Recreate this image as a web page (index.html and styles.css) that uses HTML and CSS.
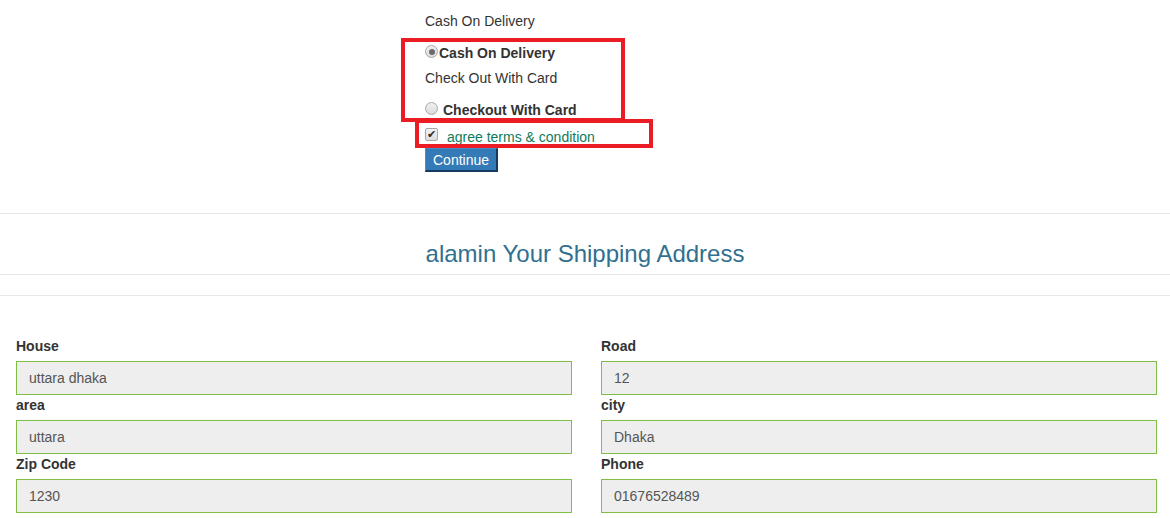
FILE: index.html
```html
<!DOCTYPE html>
<html>
<head>
<meta charset="utf-8">
<link rel="stylesheet" href="styles.css">
</head>
<body>
<section class="payment">
  <p class="method-title">Cash On Delivery</p>
  <label class="option tight"><span class="radio checked"></span><b>Cash On Delivery</b></label>
  <p class="method-title second">Check Out With Card</p>
  <label class="option"><span class="radio"></span><b>Checkout With Card</b></label>
  <label class="agree"><span class="check">&#10004;</span><span class="agree-text">agree terms &amp; condition</span></label>
  <button class="continue" type="button">Continue</button>
  <div class="mark mark-methods"></div>
  <div class="mark mark-agree"></div>
</section>
<hr class="rule rule-top">
<h2 class="ship-title">alamin Your Shipping Address</h2>
<hr class="rule rule-mid">
<hr class="rule rule-low">
<form class="address">
  <div class="col">
    <label class="field-label">House</label>
    <input class="field" value="uttara dhaka" readonly>
    <label class="field-label">area</label>
    <input class="field" value="uttara" readonly>
    <label class="field-label">Zip Code</label>
    <input class="field" value="1230" readonly>
  </div>
  <div class="col">
    <label class="field-label">Road</label>
    <input class="field" value="12" readonly>
    <label class="field-label">city</label>
    <input class="field" value="Dhaka" readonly>
    <label class="field-label">Phone</label>
    <input class="field" value="01676528489" readonly>
  </div>
</form>
</body>
</html>
```
FILE: styles.css
```css
html, body {
  margin: 0;
  padding: 0;
  background: #fff;
}
body {
  font-family: "Liberation Sans", Arial, sans-serif;
  font-size: 14px;
  line-height: 20px;
  color: #333;
  overflow: hidden;
}
.payment {
  position: relative;
  padding: 11px 0 0 425px;
  height: 162px;
}
.method-title {
  margin: 0 0 11px;
  line-height: 20px;
}
.method-title.second {
  margin-bottom: 11px;
}
.option {
  display: flex;
  align-items: flex-start;
  height: 20px;
  margin-bottom: 6px;
  gap: 5px;
}
.option.tight {
  gap: 1px;
}
.option b {
  font-weight: bold;
  color: #333;
  padding-top: 1px;
  line-height: 20px;
}
.option + .agree {
  margin-top: 7px;
}
.radio {
  box-sizing: border-box;
  width: 13px;
  height: 13px;
  flex: none;
  border-radius: 50%;
  border: 1px solid #a9a9a9;
  background: linear-gradient(#f0f0f0, #dcdcdc);
  position: relative;
  margin-top: 3px;
}
.radio.checked::after {
  content: "";
  position: absolute;
  left: 2.5px;
  top: 2.5px;
  width: 6px;
  height: 6px;
  border-radius: 50%;
  background: #6b6b6b;
}
.agree {
  display: flex;
  align-items: flex-start;
  height: 20px;
  gap: 9px;
}
.check {
  box-sizing: border-box;
  flex: none;
  width: 13px;
  height: 13px;
  border: 1px solid #a9a9a9;
  border-radius: 2px;
  background: linear-gradient(#f2f2f2, #dedede);
  color: #2b2b2b;
  font-size: 11px;
  font-weight: bold;
  line-height: 11px;
  text-align: center;
  margin-top: 2px;
  font-family: "DejaVu Sans", sans-serif;
}
.agree-text {
  color: #0f7a5c;
  padding-top: 1px;
}
.continue {
  display: block;
  margin-top: 2px;
  height: 24px;
  padding: 0 7px;
  font-family: "Liberation Sans", Arial, sans-serif;
  font-size: 14px;
  color: #fff;
  background: #337ab7;
  border-style: solid;
  border-width: 1px 2px 2px 1px;
  border-color: #4a8cc6 #163a5e #163a5e #4a8cc6;
}
.mark {
  position: absolute;
  border: 4px solid #ec1c24;
  box-sizing: border-box;
  pointer-events: none;
}
.mark-methods {
  left: 401px;
  top: 38px;
  width: 224px;
  height: 84px;
}
.mark-agree {
  left: 415px;
  top: 119px;
  width: 238px;
  height: 29px;
}
.rule {
  border: 0;
  border-top: 1px solid #e8e8e8;
  margin: 0;
}
.rule-top {
  margin-top: 40px;
}
.ship-title {
  margin: 26px 0 6px;
  text-align: center;
  font-weight: normal;
  font-size: 24px;
  line-height: 28px;
  color: #31708f;
}
.rule-low {
  margin-top: 20px;
}
.address {
  display: grid;
  grid-template-columns: 1fr 1fr;
  column-gap: 29px;
  padding: 40px 13px 0 16px;
}
.col {
  display: flex;
  flex-direction: column;
}
.field-label {
  font-weight: bold;
  line-height: 20px;
  margin-bottom: 5px;
  color: #333;
}
.field {
  box-sizing: border-box;
  height: 34px;
  width: 100%;
  padding: 0 12px;
  border: 1px solid #7fbf45;
  background: #eee;
  font-family: "Liberation Sans", Arial, sans-serif;
  font-size: 14px;
  color: #555;
  outline: none;
}
```
